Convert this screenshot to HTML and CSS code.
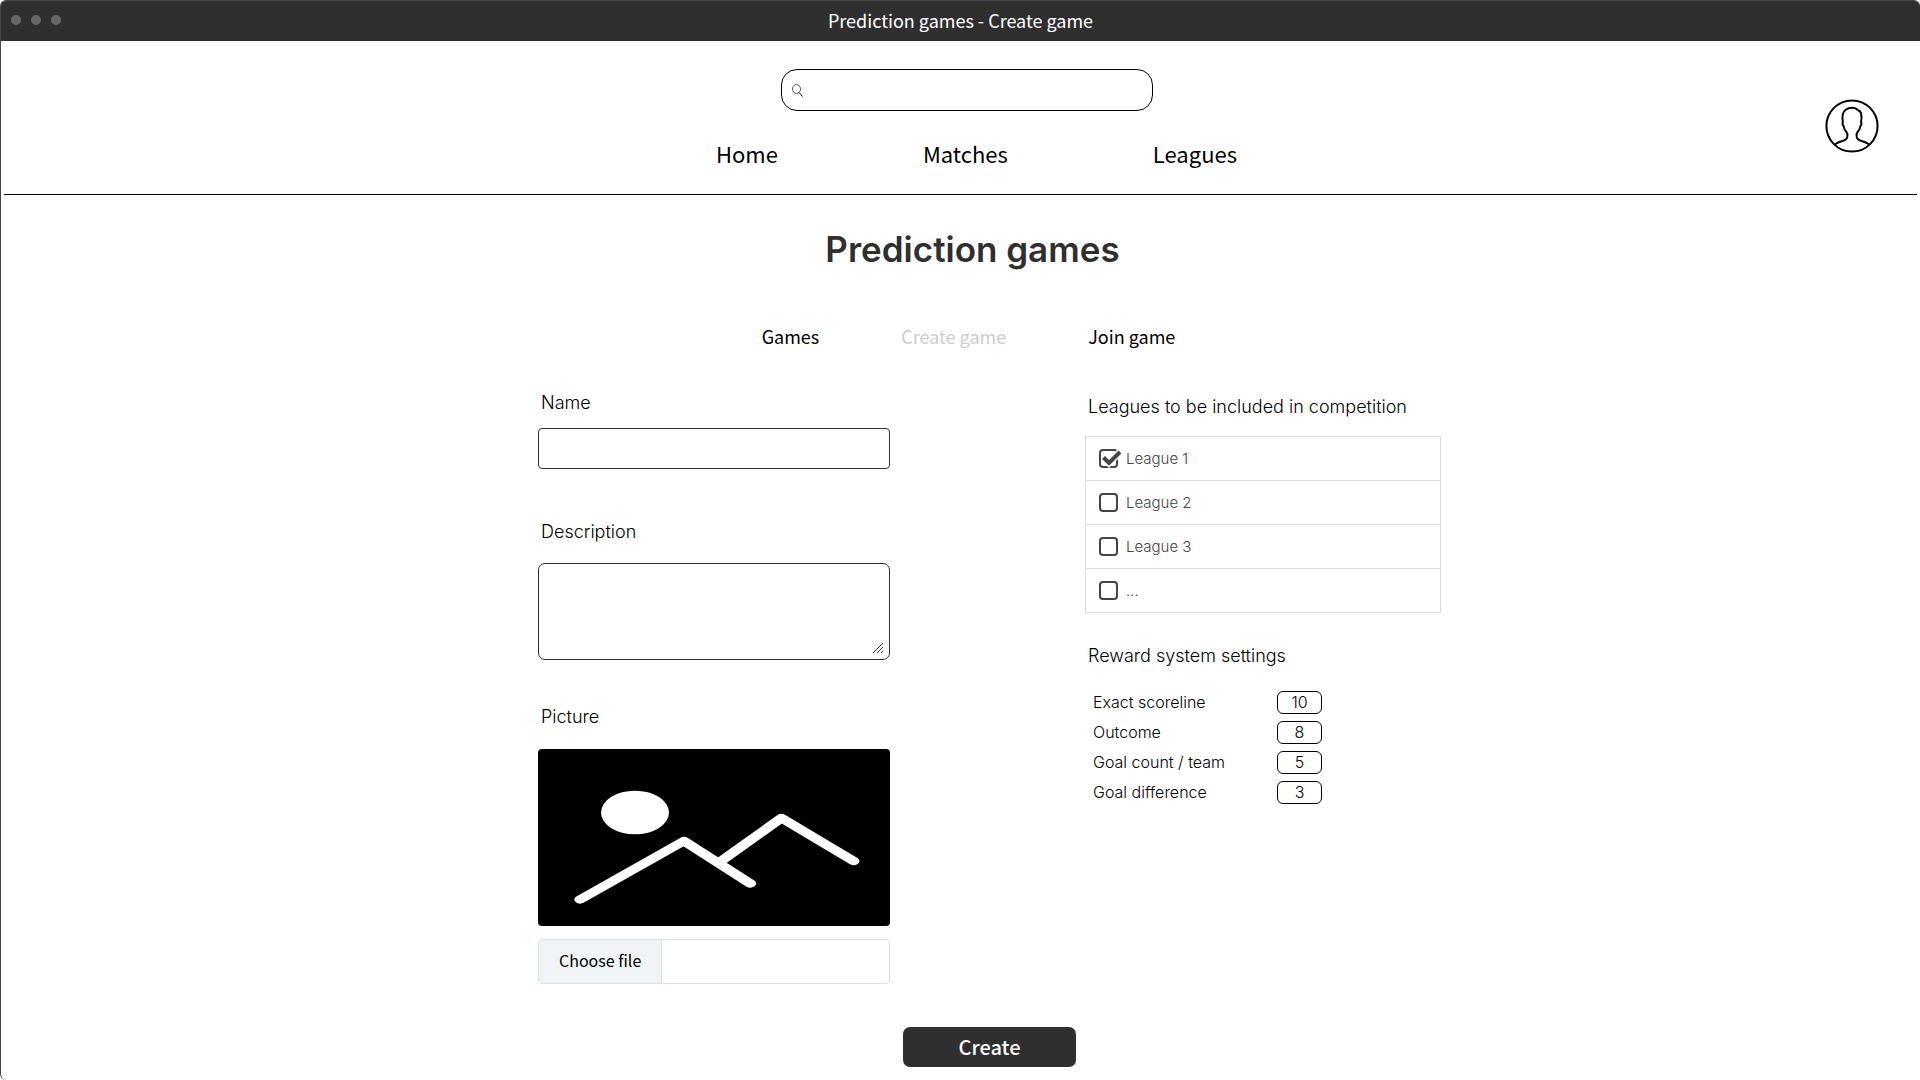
FILE: index.html
```html
<!DOCTYPE html>
<html lang="en">
<head>
<meta charset="utf-8">
<meta name="viewport" content="width=device-width, initial-scale=1">
<title>Prediction games - Create game</title>
<link rel="stylesheet" href="styles.css">
</head>
<body>
<div class="window">
  <div class="titlebar">
    <div class="dots"><span class="dot"></span><span class="dot"></span><span class="dot"></span></div>
    <span class="titlebar-text">Prediction games - Create game</span>
  </div>

  <header class="header">
    <div class="header-main">
      <div class="search">
        <svg class="search-icon" viewBox="0 0 11 13" aria-hidden="true"><ellipse cx="4.500" cy="5" rx="4" ry="4.500"/><path class="handle" d="M7 8.500 10.500 12.500"/></svg>
        <input class="search-input" type="search" aria-label="Search">
      </div>
      <nav class="nav">
        <a href="#">Home</a>
        <a href="#">Matches</a>
        <a href="#">Leagues</a>
      </nav>
    </div>
    <a class="avatar" href="#" aria-label="Profile">
      <svg viewBox="0 0 54 54" aria-hidden="true"><circle cx="27" cy="27" r="25.6"/><path d="M10 45.500C12 43 18.500 42.300 21 40.200C22.800 38.700 22.600 36.500 22.300 34.500C19.800 31.800 18.800 29 18.300 26.400C17.300 25.800 17.200 24.300 17.900 23.300C16.800 17.500 17.500 13 20.800 10.700C24.500 8 30.500 8.400 32.800 11C36.600 12.200 37.200 17.300 36 23.300C36.900 24.300 36.700 25.800 35.700 26.400C35.200 29 34.200 31.800 31.700 34.500C31.400 36.500 31.200 38.700 33 40.200C35.500 42.300 42 43 44 45.500"/></svg>
    </a>
  </header>

  <main class="main">
    <h1 class="heading">Prediction games</h1>
    <nav class="tabs">
      <a href="#">Games</a>
      <a class="current" href="#" aria-current="page">Create game</a>
      <a href="#">Join game</a>
    </nav>

    <form class="form">
      <div class="details">
        <div class="field field-name">
          <label class="label" for="name">Name</label>
          <input class="box" id="name" type="text">
        </div>
        <div class="field field-description">
          <label class="label" for="description">Description</label>
          <div class="textarea-wrap">
            <textarea class="box area" id="description"></textarea>
            <svg class="grip" viewBox="0 0 10 10" aria-hidden="true"><path d="M0 10 10 0M4 10 10 4M8 10 10 8"/></svg>
          </div>
        </div>
        <div class="field field-picture">
          <label class="label" for="picture">Picture</label>
          <svg class="preview" viewBox="0 0 352 177" preserveAspectRatio="none" role="img" aria-label="Picture preview">
            <ellipse cx="97" cy="63.500" rx="34" ry="21.800"/>
            <g transform="scale(1.48 1)"><path d="M28.500 150.500 98.600 92 143.400 134.500M122.800 113 164.500 69 213.200 112"/></g>
          </svg>
          <div class="file">
            <span class="file-button">Choose file</span>
            <input class="file-input" id="picture" type="file">
          </div>
        </div>
      </div>

      <div class="settings">
        <fieldset class="group">
          <legend class="label">Leagues to be included in competition</legend>
          <div class="leagues">
            <label class="league"><span class="check"><input type="checkbox" checked><svg class="tick" viewBox="0 0 22 20" aria-hidden="true"><path class="halo" d="M4.500 8.500 10 14 21 3"/><path d="M4.500 8.500 10 14 21 3"/></svg></span>League 1</label>
            <label class="league"><span class="check"><input type="checkbox"></span>League 2</label>
            <label class="league"><span class="check"><input type="checkbox"></span>League 3</label>
            <label class="league"><span class="check"><input type="checkbox"></span>...</label>
          </div>
        </fieldset>
        <fieldset class="group">
          <legend class="label">Reward system settings</legend>
          <div class="rewards">
            <label for="exact">Exact scoreline</label><input id="exact" type="text" inputmode="numeric" value="10">
            <label for="outcome">Outcome</label><input id="outcome" type="text" inputmode="numeric" value="8">
            <label for="count">Goal count / team</label><input id="count" type="text" inputmode="numeric" value="5">
            <label for="difference">Goal difference</label><input id="difference" type="text" inputmode="numeric" value="3">
          </div>
        </fieldset>
      </div>

      <button class="submit" type="submit">Create</button>
    </form>
  </main>
</div>
</body>
</html>
```
FILE: styles.css
```css
* { box-sizing: border-box; }

body {
  margin: 0;
  background: #fff;
  color: #000;
  font-family: Inter, "Liberation Sans", sans-serif;
  font-weight: 300;
}

a { color: inherit; text-decoration: none; }

input, textarea, button { font: inherit; color: inherit; }

.window {
  min-height: 100vh;
  border: 1px solid #444;
  border-width: 1px 0 0 1px;
  border-radius: 6px;
  overflow: hidden;
}

.titlebar,
.nav,
.tabs,
.file-button,
.submit {
  font-family: "Noto Sans CJK SC", "Noto Sans", sans-serif;
  font-weight: 400;
}

.titlebar {
  display: grid;
  grid-template-columns: 1fr auto 1fr;
  align-items: center;
  height: 40px;
  padding: 0 10px 2px;
  background: #2f2f2f;
  color: #fff;
  font-size: 18px;
  line-height: 38px;
}

.dots { display: flex; gap: 10px; }

.dot {
  width: 10px;
  height: 10px;
  border-radius: 50%;
  background: #666;
}

.header {
  display: grid;
  grid-template-columns: 1fr auto 1fr;
  margin: 0 3px;
  padding: 28px 38px 24px;
  border-bottom: 1px solid #000;
}

.header-main {
  grid-column: 2;
  display: flex;
  flex-direction: column;
  align-items: center;
  gap: 25px;
  padding-left: 14px;
}

.search {
  display: flex;
  align-items: center;
  gap: 8px;
  width: 372px;
  height: 42px;
  padding: 0 12px 0 10px;
  border: 1px solid #000;
  border-radius: 16px;
}

.search-icon {
  width: 11px;
  height: 13px;
  fill: none;
  stroke: #555;
}

.search-icon .handle { stroke: #000; }

.search-input {
  flex: 1;
  min-width: 0;
  border: 0;
  outline: 0;
  background: none;
  font-size: 16px;
}

.nav {
  display: flex;
  gap: 145px;
  padding-left: 18px;
  font-size: 22px;
  line-height: 34px;
}

.avatar {
  justify-self: end;
  align-self: start;
  padding-top: 30px;
}

.avatar svg {
  display: block;
  width: 54px;
  height: 54px;
  fill: none;
  stroke: #000;
  stroke-width: 2;
}

.main {
  display: flex;
  flex-direction: column;
  align-items: center;
  padding: 32px 0 12px;
}

.heading {
  margin: 0;
  padding-left: 24px;
  color: #2f2f2f;
  font-size: 35px;
  font-weight: 600;
  line-height: 44px;
}

.tabs {
  display: flex;
  gap: 82px;
  margin-top: 51px;
  padding-left: 16px;
  font-size: 18px;
  line-height: 28px;
}

.tabs .current { color: #ccc; }

.form {
  display: grid;
  grid-template-columns: 352px 356px;
  column-gap: 195px;
  margin-top: 41px;
  padding-left: 58px;
}

.label {
  padding: 0 0 0 3px;
  font-size: 18px;
  line-height: 24px;
}

.details {
  display: flex;
  flex-direction: column;
}

.field {
  display: flex;
  flex-direction: column;
}

.field-name { gap: 13px; }
.field-description { gap: 19px; margin-top: 51px; }
.field-picture { gap: 20px; margin-top: 45px; }

.box {
  display: block;
  width: 100%;
  height: 41px;
  padding: 0 12px;
  border: 1px solid #2f2f2f;
  border-radius: 4px;
  background: #fff;
  font-size: 16px;
}

.textarea-wrap { position: relative; }

.area {
  height: 97px;
  padding: 10px 12px;
  border-radius: 7px;
  resize: none;
}

.grip {
  position: absolute;
  right: 7px;
  bottom: 7px;
  width: 10px;
  height: 10px;
  fill: none;
  stroke: #2f2f2f;
}

.preview {
  display: block;
  width: 100%;
  height: 177px;
  border-radius: 4px;
  background: #000;
  fill: #fff;
}

.preview path {
  fill: none;
  stroke: #fff;
  stroke-width: 8;
  stroke-linecap: round;
  stroke-linejoin: round;
}

.file {
  position: relative;
  display: flex;
  height: 45px;
  margin-top: -7px;
  border: 1px solid #d9e0e6;
  border-radius: 4px;
}

.file-button {
  padding: 0 20px;
  border-right: 1px solid #d9e0e6;
  background: #f0f4f7;
  font-size: 16px;
  line-height: 40px;
}

.file-input {
  position: absolute;
  inset: 0;
  width: 100%;
  opacity: 0;
}

.settings {
  display: flex;
  flex-direction: column;
  gap: 31px;
  padding-top: 4px;
}

.group {
  min-width: 0;
  margin: 0;
  padding: 0;
  border: 0;
}

.leagues {
  margin-top: 17px;
  border: 1px solid #ddd;
}

.league {
  display: flex;
  align-items: center;
  gap: 8px;
  height: 44px;
  padding: 0 0 1px 13px;
  color: #444;
  font-size: 15px;
}

.league:first-child { height: 43px; }

.league + .league { border-top: 1px solid #ddd; }

.check { position: relative; display: flex; }

.check input {
  appearance: none;
  width: 19px;
  height: 19px;
  margin: 0;
  border: 2px solid #444;
  border-radius: 4px;
}

.tick {
  position: absolute;
  left: 0;
  top: 0;
  width: 22px;
  height: 20px;
  overflow: visible;
  fill: none;
  stroke: #444;
  stroke-width: 4;
  pointer-events: none;
}

.tick .halo { stroke: #fff; stroke-width: 7; }

.rewards {
  display: grid;
  grid-template-columns: 176px 45px;
  gap: 7px 8px;
  margin-top: 23px;
  padding-left: 8px;
  font-size: 16px;
  line-height: 23px;
}

.rewards input {
  width: 100%;
  height: 23px;
  padding: 0;
  border: 1px solid #000;
  border-radius: 6px;
  background: #fff;
  text-align: center;
}

.submit {
  grid-column: 1 / -1;
  justify-self: center;
  width: 173px;
  height: 40px;
  margin-top: 43px;
  padding: 0;
  border: 0;
  border-radius: 7px;
  background: #2f2f2f;
  color: #fff;
  font-size: 20px;
  font-weight: 500;
  line-height: 40px;
}
```
